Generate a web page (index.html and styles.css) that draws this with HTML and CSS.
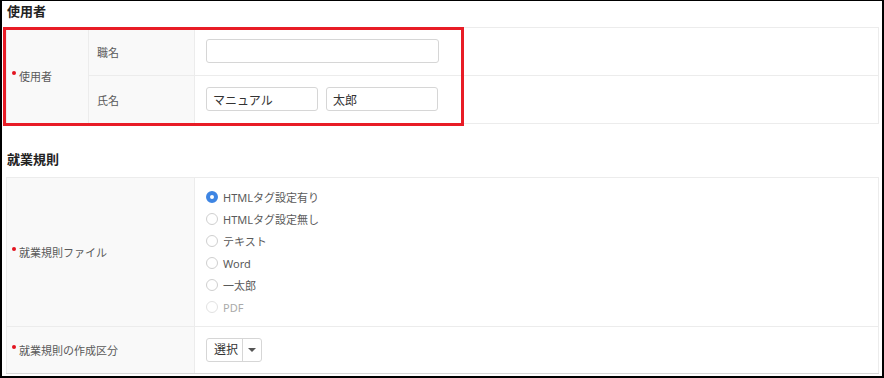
FILE: index.html
```html
<!DOCTYPE html>
<html lang="ja">

<head>
    <meta charset="UTF-8">
    <meta name="viewport" content="width=device-width, initial-scale=1.0">
    <title>就業規則</title>
    <link rel="stylesheet" href="styles.css">
</head>

<body>
    <div class="page">
        <h2 class="section__title">使用者</h2>
        <div class="section__body highlight">
            <table class="form-table">
                <colgroup>
                    <col class="form-table__col-label-sm">
                    <col class="form-table__col-sub">
                    <col>
                </colgroup>
                <tr>
                    <th class="form-table__label" rowspan="2"><span class="required">使用者</span></th>
                    <th class="form-table__label form-table__label--sub">職名</th>
                    <td class="form-table__field"><input class="text-input text-input--wide" type="text"></td>
                </tr>
                <tr>
                    <th class="form-table__label form-table__label--sub">氏名</th>
                    <td class="form-table__field">
                        <div class="name-fields">
                            <input class="text-input text-input--half" type="text" value="マニュアル">
                            <input class="text-input text-input--half" type="text" value="太郎">
                        </div>
                    </td>
                </tr>
            </table>
            <span class="highlight__frame"></span>
        </div>

        <h2 class="section__title section__title--gap">就業規則</h2>
        <table class="form-table form-table--rules">
            <colgroup>
                <col class="form-table__col-label">
                <col>
            </colgroup>
            <tr class="form-table__row--split">
                <th class="form-table__label"><span class="required">就業規則ファイル</span></th>
                <td class="form-table__field form-table__field--list">
                    <label class="radio"><input type="radio" name="rule" checked><span>HTMLタグ設定有り</span></label>
                    <label class="radio"><input type="radio" name="rule"><span>HTMLタグ設定無し</span></label>
                    <label class="radio"><input type="radio" name="rule"><span>テキスト</span></label>
                    <label class="radio"><input type="radio" name="rule"><span>Word</span></label>
                    <label class="radio"><input type="radio" name="rule"><span>一太郎</span></label>
                    <label class="radio radio--disabled"><input type="radio" name="rule" disabled><span>PDF</span></label>
                </td>
            </tr>
            <tr class="form-table__row--split">
                <th class="form-table__label"><span class="required">就業規則の作成区分</span></th>
                <td class="form-table__field form-table__field--select">
                    <div class="select">
                        <span class="select__value">選択</span>
                        <span class="select__caret"></span>
                    </div>
                </td>
            </tr>
        </table>
    </div>
</body>

</html>
```

FILE: styles.css
```css
* {
    box-sizing: border-box;
}

html,
body {
    margin: 0;
    padding: 0;
    background-color: #fff;
}

body {
    font-family: "Noto Sans", "Noto Sans CJK JP", sans-serif;
    color: #444;
}

.page {
    width: 884px;
    height: 378px;
    overflow: hidden;
    border: 2px solid #000;
    border-top-width: 1px;
    padding: 0 4px 0 4px;
}

.section__title {
    margin: 0 0 6px 1px;
    font-size: 13px;
    line-height: 20px;
    font-weight: bold;
    color: #222;
}

.section__title--gap {
    margin-top: 25px;
    margin-bottom: 8px;
}

.highlight {
    position: relative;
}

.highlight__frame {
    position: absolute;
    left: -3px;
    top: 0;
    width: 461px;
    height: 99px;
    border: 3px solid #e81c26;
    pointer-events: none;
}

.form-table {
    width: 873px;
    border-collapse: collapse;
    table-layout: fixed;
    border: 1px solid #e8e8e8;
}

.form-table__col-label-sm {
    width: 82px;
}

.form-table__col-sub {
    width: 106px;
}

.form-table__col-label {
    width: 188px;
}

.form-table th,
.form-table td {
    border: 1px solid #ececec;
    padding: 0;
}

.form-table__label {
    background-color: #f9f9f9;
    text-align: left;
    font-weight: normal;
    font-size: 11px;
    color: #5a5a5a;
    padding-left: 5px !important;
}

.form-table__label--sub {
    padding-left: 8px !important;
}

.form-table__field {
    height: 48px;
    padding: 0 11px 1px !important;
}

.form-table--rules {
    border-color: #e4e4e4;
}

.form-table--rules .form-table__row--split + .form-table__row--split td,
.form-table--rules .form-table__row--split + .form-table__row--split th {
    border-top-color: #d8d8d8;
}

.form-table--rules tr:last-child td,
.form-table--rules tr:last-child th {
    border-bottom-color: #d8d8d8;
}

.form-table__field--list {
    padding: 8px 11px !important;
}

.form-table__field--select {
    height: 47px;
}

.required::before {
    content: "";
    display: inline-block;
    width: 4px;
    height: 4px;
    border-radius: 50%;
    background-color: #e3141f;
    margin-right: 3px;
    vertical-align: 6px;
}

.text-input {
    display: block;
    height: 24px;
    border: 1px solid #d6d6d6;
    border-radius: 3px;
    background: #fff;
    padding: 0 6px;
    font: 12px "Noto Sans CJK JP", sans-serif;
    color: #333;
    outline: 0;
}

.text-input--wide {
    width: 233px;
}

.text-input--half {
    width: 112px;
}

.name-fields {
    display: flex;
    gap: 8px;
}

.radio {
    display: flex;
    align-items: center;
    height: 22px;
    font-size: 11px;
    color: #5a5a5a;
}

.radio input {
    appearance: none;
    -webkit-appearance: none;
    margin: 0 5px 0 0;
    width: 12px;
    height: 12px;
    border: 1px solid #cfcfcf;
    border-radius: 50%;
    background: #fff;
    flex-shrink: 0;
}

.radio input:checked {
    border: 4px solid #3e85e3;
    background: #fff;
}

.radio--disabled {
    color: #aaa;
}

.radio--disabled input {
    border-color: #e2e2e2;
}

.select {
    display: inline-flex;
    height: 24px;
    border: 1px solid #d6d6d6;
    border-radius: 3px;
    background: #fff;
    vertical-align: middle;
}

.select__value {
    width: 36px;
    padding-left: 7px;
    font-size: 12px;
    line-height: 22px;
    color: #333;
    border-right: 1px solid #d6d6d6;
}

.select__caret {
    width: 18px;
    position: relative;
}

.select__caret::after {
    content: "";
    position: absolute;
    left: 5px;
    top: 9px;
    border-left: 4px solid transparent;
    border-right: 4px solid transparent;
    border-top: 4px solid #555;
}
```
